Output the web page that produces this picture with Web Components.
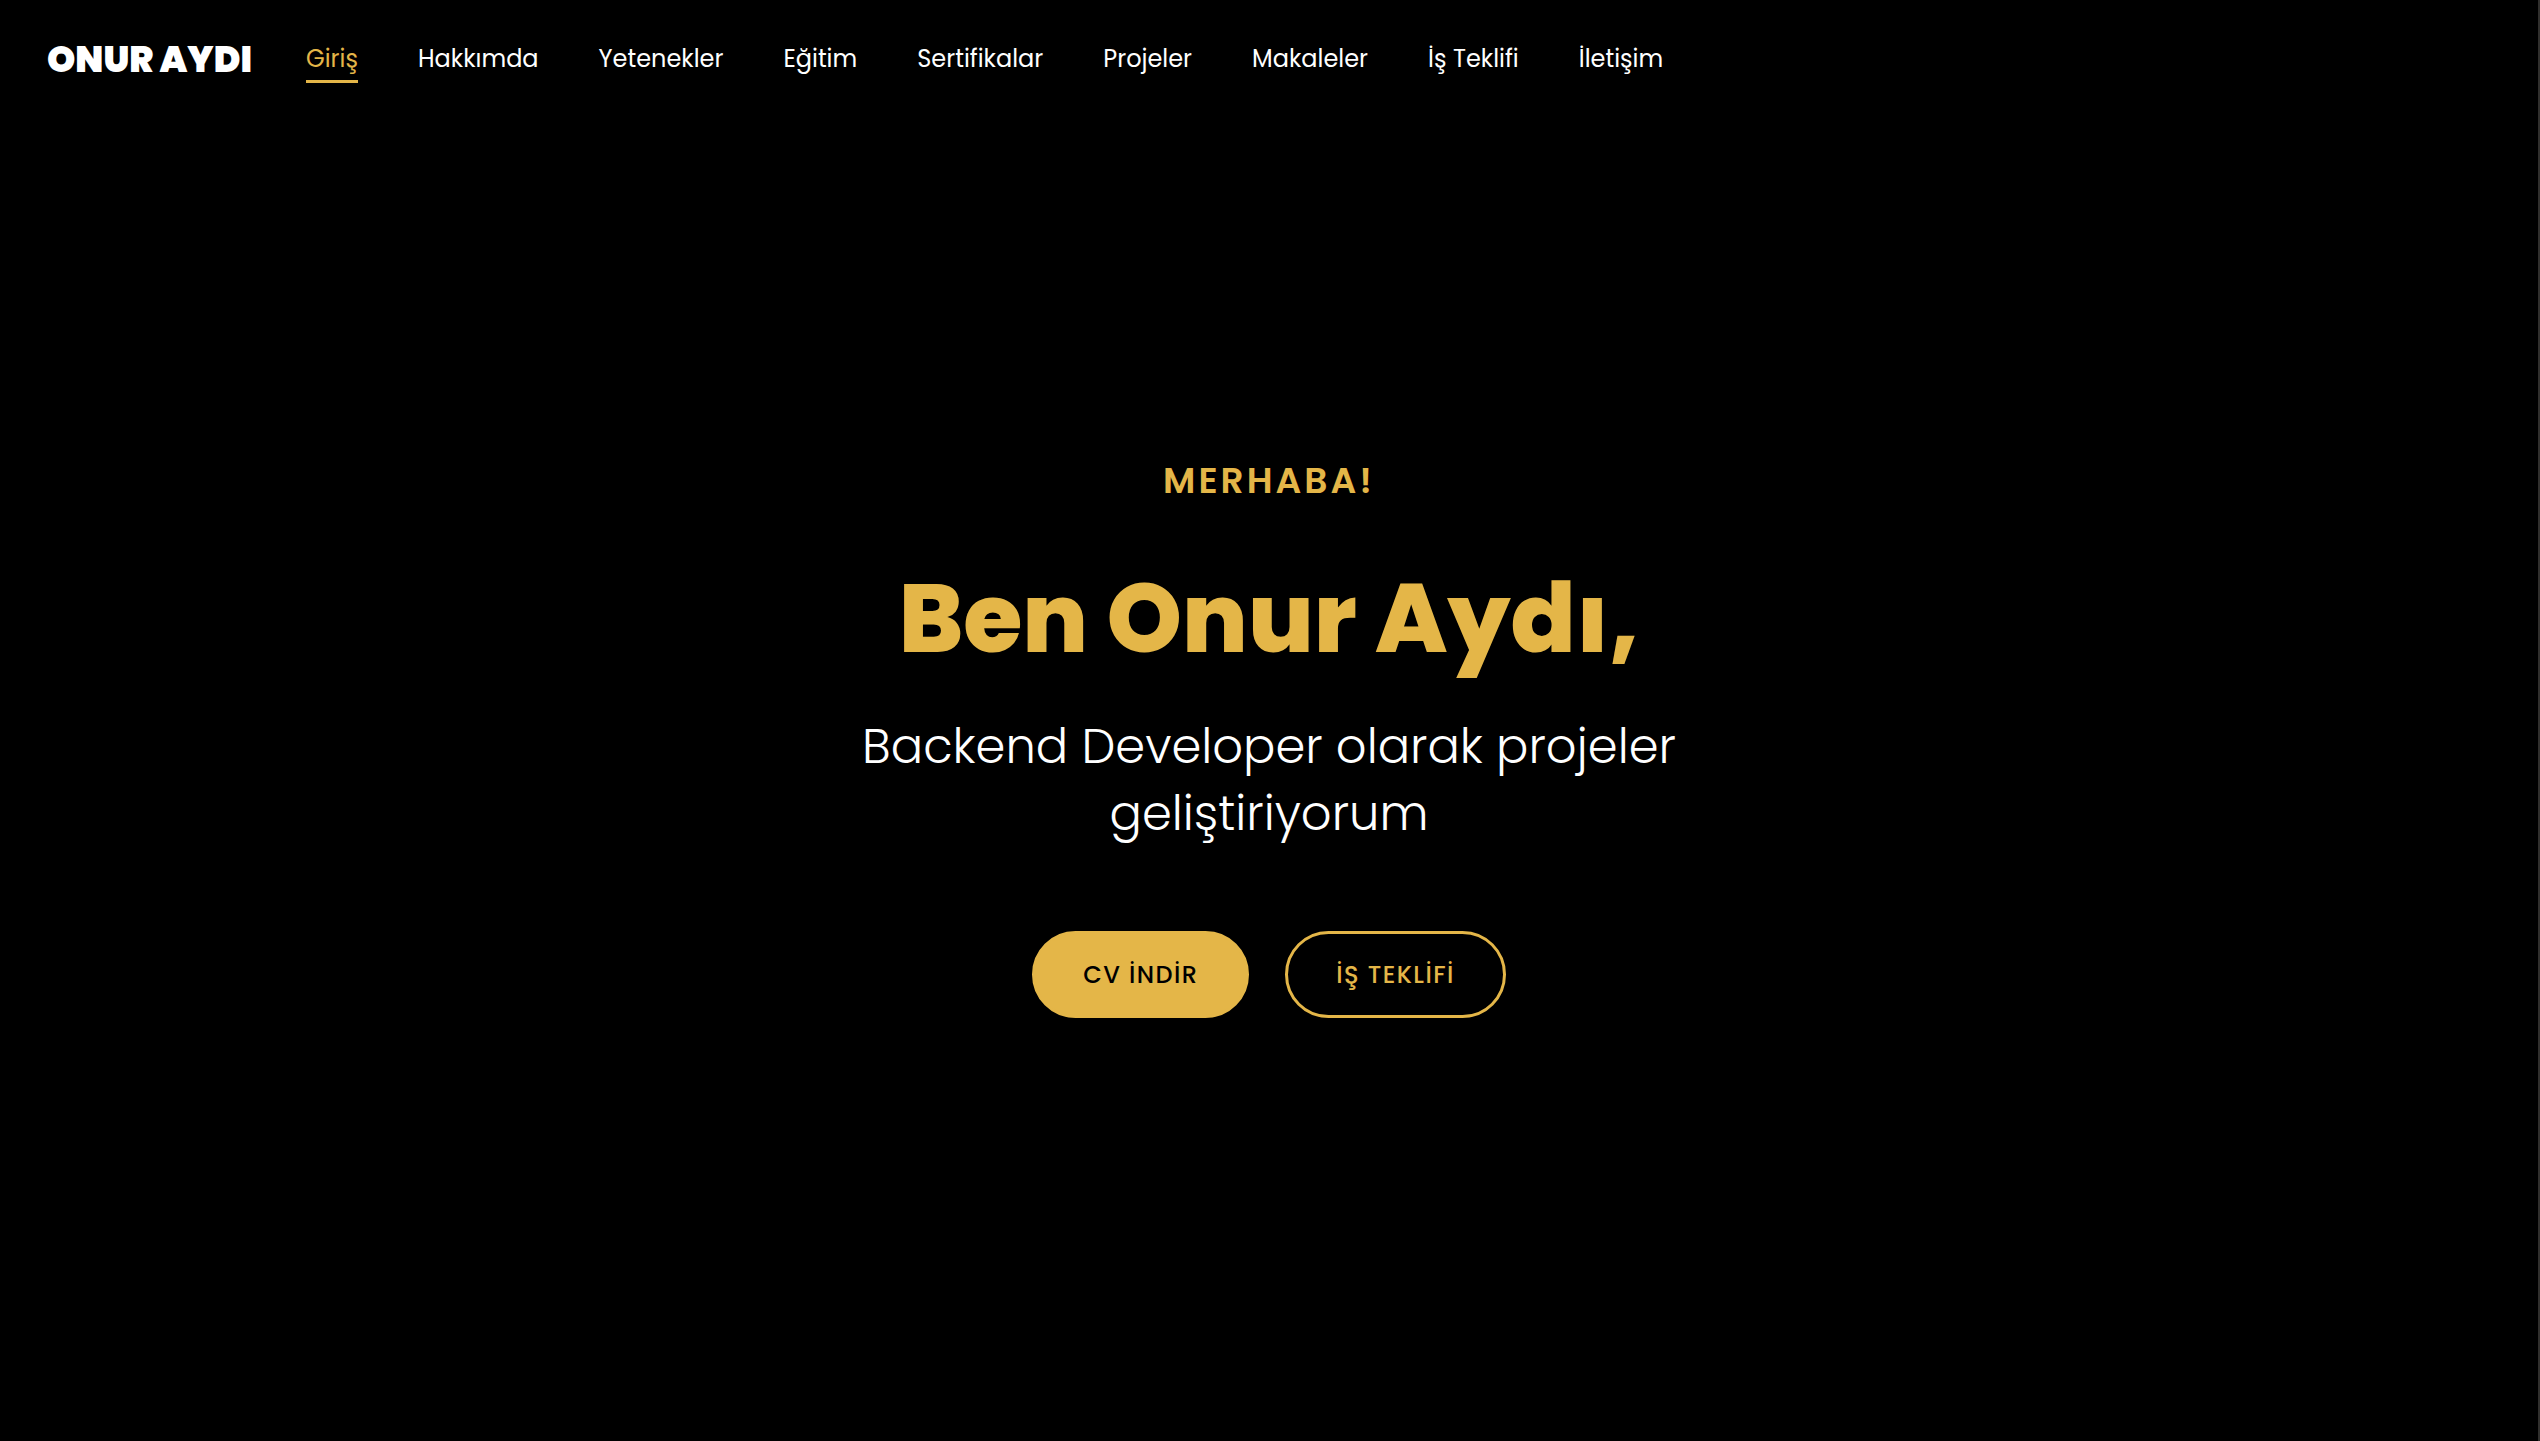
<!DOCTYPE html>
<html lang="tr">
<head>
<meta charset="utf-8">
<title>Onur Aydı</title>
<style>
html { background: #000; }
body {
  --gold: #e4b648;
  margin: 0;
  min-height: 100vh;
  box-sizing: border-box;
  border-right: 2px solid #302f2d;
  display: flex;
  flex-direction: column;
  background: #000;
  color: #fff;
  font-family: Poppins, Inter, "Open Sans", sans-serif;
  font-size: 24px;
}
</style>
</head>
<body>
<site-header brand="ONUR AYDI">
  <nav-link href="#giris" active>Giriş</nav-link>
  <nav-link href="#hakkimda">Hakkımda</nav-link>
  <nav-link href="#yetenekler">Yetenekler</nav-link>
  <nav-link href="#egitim">Eğitim</nav-link>
  <nav-link href="#sertifikalar">Sertifikalar</nav-link>
  <nav-link href="#projeler">Projeler</nav-link>
  <nav-link href="#makaleler">Makaleler</nav-link>
  <nav-link href="#teklif">İş Teklifi</nav-link>
  <nav-link href="#iletisim">İletişim</nav-link>
</site-header>
<hero-section>
  <span slot="greeting">MERHABA!</span>
  <span slot="title">Ben Onur Aydı,</span>
  <span slot="subtitle">Backend Developer olarak projeler geliştiriyorum</span>
  <pill-button slot="actions" filled>CV İNDİR</pill-button>
  <pill-button slot="actions">İŞ TEKLİFİ</pill-button>
</hero-section>
<script>
class SiteHeader extends HTMLElement {
  connectedCallback() {
    this.attachShadow({ mode: "open" }).innerHTML = `
      <style>
        :host { display: block; }
        header { display: flex; align-items: center; gap: 54px; padding: 33px 47px 31px; }
        .brand { color: #fff; text-decoration: none; font-size: 36px; line-height: 54px; font-weight: 900; white-space: nowrap; }
        nav { display: flex; gap: 60px; }
      </style>
      <header><a class="brand" href="#giris"></a><nav><slot></slot></nav></header>`;
    this.shadowRoot.querySelector(".brand").textContent = this.getAttribute("brand");
  }
}
class NavLink extends HTMLElement {
  connectedCallback() {
    this.attachShadow({ mode: "open" }).innerHTML = `
      <style>
        :host { display: block; }
        a { display: block; color: #fff; text-decoration: none; line-height: 32px; padding: 6px 0 5px; border-bottom: 3px solid transparent; white-space: nowrap; }
        :host([active]) a { color: var(--gold); border-color: var(--gold); }
      </style>
      <a><slot></slot></a>`;
    this.shadowRoot.querySelector("a").href = this.getAttribute("href");
  }
}
class HeroSection extends HTMLElement {
  connectedCallback() {
    this.attachShadow({ mode: "open" }).innerHTML = `
      <style>
        :host { flex: 1; display: flex; flex-direction: column; align-items: center; justify-content: center; text-align: center; padding: 0 24px 88px; }
        p, h1 { margin: 0; }
        .greeting { color: var(--gold); font-size: 36px; line-height: 54px; font-weight: 600; letter-spacing: 3px; margin-bottom: 39px; }
        h1 { color: var(--gold); font-size: 96px; line-height: 144px; font-weight: 800; }
        .subtitle { max-width: 880px; font-size: 48px; line-height: 67px; font-weight: 300; margin: 22px 0 84px; }
        .actions { display: flex; gap: 36px; }
      </style>
      <p class="greeting"><slot name="greeting"></slot></p>
      <h1><slot name="title"></slot></h1>
      <p class="subtitle"><slot name="subtitle"></slot></p>
      <div class="actions"><slot name="actions"></slot></div>`;
  }
}
class PillButton extends HTMLElement {
  connectedCallback() {
    this.attachShadow({ mode: "open" }).innerHTML = `
      <style>
        :host { display: block; }
        button { display: block; margin: 0; padding: 24px 48px; border: 3px solid var(--gold); border-radius: 44px; background: transparent; color: var(--gold); font: inherit; font-size: 24px; font-weight: 500; line-height: 33px; letter-spacing: 0.06em; white-space: nowrap; }
        :host([filled]) button { background: var(--gold); color: #000; }
      </style>
      <button type="button"><slot></slot></button>`;
  }
}
customElements.define("site-header", SiteHeader);
customElements.define("nav-link", NavLink);
customElements.define("hero-section", HeroSection);
customElements.define("pill-button", PillButton);
</script>
</body>
</html>
